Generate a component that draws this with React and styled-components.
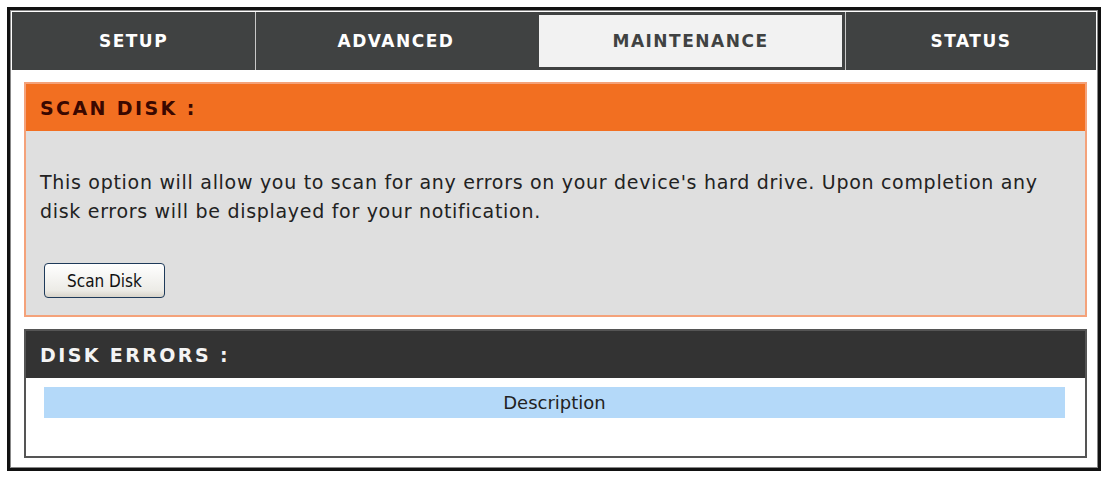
import React from "react";
import styled, { createGlobalStyle } from "styled-components";

const GlobalStyle = createGlobalStyle`
  html, body {
    margin: 0;
    padding: 0;
    background: #fff;
  }
  body {
    font-family: "DejaVu Sans", Tahoma, sans-serif;
  }
`;

const Frame = styled.div`
  margin: 7px 0 0 7px;
  width: 1084px;
  height: 454px;
  border: 3px solid #111;
  box-shadow: inset 0 0 0 1px #888;
  display: flex;
  flex-direction: column;
  padding: 2px;
  box-sizing: content-box;
`;

const TabBar = styled.div`
  display: flex;
  height: 58px;
  background: #404242;
`;

const Tab = styled.div`
  width: ${(p) => p.width}px;
  display: flex;
  align-items: center;
  justify-content: center;
  font-family: "DejaVu Sans", Verdana, sans-serif;
  font-weight: bold;
  font-size: 17px;
  letter-spacing: 1.5px;
  color: ${(p) => (p.active ? "#404242" : "#fff")};
  background: ${(p) => (p.active ? "#f2f2f2" : "#404242")};
  border-left: 1px solid #c8c8c8;
  box-sizing: border-box;
  ${(p) => p.active && "border: 3px solid #404242; border-left: 3px solid #404242;"}
  &:first-child {
    border-left: none;
  }
`;

const Content = styled.div`
  flex: 1;
  display: flex;
  flex-direction: column;
  padding: 12px 9px 8px 12px;
  gap: 12px;
`;

const Panel = styled.div`
  display: flex;
  flex-direction: column;
  border: 2px solid ${(p) => p.edge};
  background: ${(p) => p.bg};
  flex: ${(p) => p.grow || "none"};
`;

const PanelHead = styled.div`
  height: 47px;
  display: flex;
  align-items: center;
  padding-left: 14px;
  background: ${(p) => p.bg};
  color: ${(p) => p.fg};
  font-family: "DejaVu Sans", Verdana, sans-serif;
  font-weight: bold;
  font-size: 19px;
  letter-spacing: 2.4px;
`;

const Body = styled.div`
  padding: 37px 40px 17px 14px;
  color: #222;
  font-family: "DejaVu Sans", Tahoma, sans-serif;
  font-size: 19px;
  letter-spacing: 0.7px;
  line-height: 29px;
`;

const Para = styled.p`
  margin: 0 0 37px 0;
`;

const Button = styled.button`
  display: block;
  box-sizing: border-box;
  margin-left: 4px;
  font-family: "DejaVu Sans Condensed", "DejaVu Sans", Tahoma, sans-serif;
  font-size: 17px;
  color: #111;
  padding: 4px 8px;
  height: 35px;
  width: 121px;
  border: 1px solid #1e3a5a;
  border-radius: 4px;
  background: linear-gradient(#ffffff, #ecebe6 80%, #d8d4ca);
`;

const Table = styled.div`
  padding: 9px 20px 0 18px;
`;

const HeadRow = styled.div`
  height: 31px;
  background: #b4d9f9;
  display: flex;
  align-items: center;
  justify-content: center;
  font-family: "DejaVu Sans", Tahoma, sans-serif;
  font-size: 18px;
  color: #222;
`;

const tabs = [
  { label: "SETUP", width: 243 },
  { label: "ADVANCED", width: 281 },
  { label: "MAINTENANCE", width: 309, active: true },
  { label: "STATUS", width: 251 },
];

export default function App() {
  return (
    <>
      <GlobalStyle />
      <Frame>
        <TabBar>
          {tabs.map((t) => (
            <Tab key={t.label} width={t.width} active={t.active}>
              {t.label}
            </Tab>
          ))}
        </TabBar>
        <Content>
          <Panel edge="#f4a27a" bg="#dfdfdf">
            <PanelHead bg="#f26f21" fg="#3a0800">
              SCAN DISK :
            </PanelHead>
            <Body>
              <Para>
                This option will allow you to scan for any errors on your
                device's hard drive. Upon completion any disk errors will be
                displayed for your notification.
              </Para>
              <Button>Scan Disk</Button>
            </Body>
          </Panel>
          <Panel edge="#555" bg="#fff" grow="1">
            <PanelHead bg="#333333" fg="#f4f4f4">
              DISK ERRORS :
            </PanelHead>
            <Table>
              <HeadRow>Description</HeadRow>
            </Table>
          </Panel>
        </Content>
      </Frame>
    </>
  );
}
